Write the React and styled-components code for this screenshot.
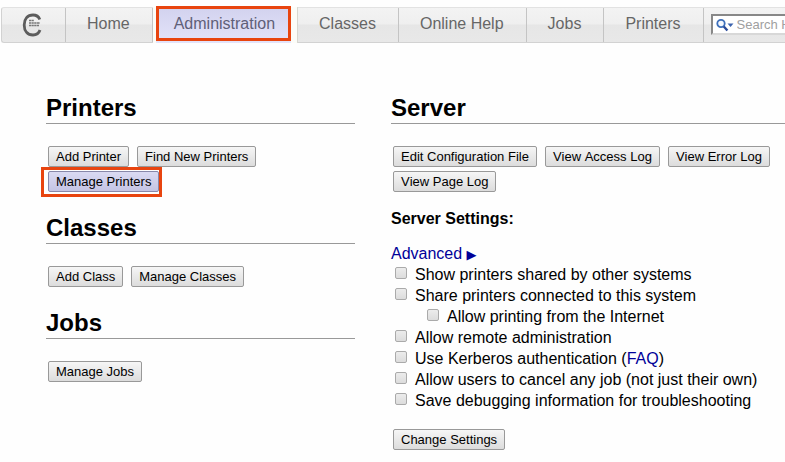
import React from "react";
import styled, { createGlobalStyle, css } from "styled-components";

const GlobalStyle = createGlobalStyle`
  * { box-sizing: border-box; }
  body {
    margin: 0;
    background: #fefefe;
    color: #000;
    font: 16px/21px "Liberation Sans", Arial, sans-serif;
  }
`;

const highlight = css`
  position: relative;
  &::after {
    content: "";
    position: absolute;
    border: 3px solid #e8440f;
    pointer-events: none;
  }
`;

const NavBar = styled.nav`
  display: flex;
  height: 36px;
  margin: 7px 0 0 1px;
  border: 1px solid #d2d2d2;
  border-top-color: #e2e2e2;
  border-right: 0;
  border-radius: 3px 0 0 3px;
  background: linear-gradient(#f3f3f3 0, #efefef 48%, #e6e6e6 49%, #e8e8e8 100%);
`;

const LogoLink = styled.a`
  display: flex;
  flex: none;
  align-items: center;
  justify-content: center;
  width: 64px;
  padding-right: 3px;
  border-right: 1px solid #c4c4c4;
`;

const Tab = styled.a`
  flex: none;
  padding: 0 22px 0 21px;
  border-right: 1px solid #c4c4c4;
  color: #666;
  line-height: 32px;
  text-decoration: none;
  ${(p) =>
    p.$active &&
    css`
      ${highlight}
      margin: -1px 0;
      border-right-color: #d8d8d0;
      background: linear-gradient(#d2d2ee, #e4e4fa) 3px 0 / calc(100% - 9px) 100% no-repeat #fcfcf8;
      color: #606078;
      line-height: 34px;
      &::after { inset: -1px 6px 2px 3px; }
    `}
`;

const SearchBox = styled.label`
  display: flex;
  flex: 1;
  align-items: center;
  min-width: 0;
  height: 21px;
  margin: 6px 0 0 7px;
  padding-left: 3px;
  border: 2px solid #d8d8d8;
  border-top-color: #888;
  border-left-color: #888;
  border-right: 0;
  background: #fff;
`;

const SearchInput = styled.input`
  flex: 1;
  min-width: 0;
  padding: 0;
  border: 0;
  outline: 0;
  margin-left: 3px;
  background: transparent;
  font: 13px "Liberation Sans", Arial, sans-serif;
  &::placeholder { color: #a0a0a0; opacity: 1; }
`;

const Content = styled.main`
  display: grid;
  grid-template-columns: minmax(0, 309fr) minmax(0, 394fr);
  gap: 36px;
  padding: 50px 0 0 46px;
`;

const Section = styled.section`
  margin-bottom: 19px;
`;

const Heading = styled.h2`
  margin: 0 0 20px;
  padding-bottom: 1px;
  border-bottom: 1px solid #999;
  font-size: 24px;
  line-height: 29px;
`;

const Actions = styled.div`
  display: flex;
  flex-wrap: wrap;
  gap: 4px 8px;
  padding: 2px;
`;

const Button = styled.button`
  height: 21px;
  padding: 0 7px;
  border: 1px solid #999;
  border-radius: 2px;
  background: linear-gradient(#f6f6f6, #dcdcdc);
  color: #000;
  font: 13px/19px "Liberation Sans", Arial, sans-serif;
  font-kerning: none;
  white-space: nowrap;
  ${(p) =>
    p.$marked &&
    css`
      ${highlight}
      border-color: #8888aa;
      background: linear-gradient(#dadaf2, #c4c4e4);
      &::after { inset: -5px -4px -6px -8px; }
    `}
`;

const SettingsTitle = styled.h3`
  margin: 14px 0;
  font-size: 16px;
  line-height: 21px;
`;

const Link = styled.a`
  color: #000099;
  text-decoration: none;
`;

const Arrow = styled.span`
  font: 13px/16px "DejaVu Sans", sans-serif;
`;

const Settings = styled.div`
  margin-bottom: 16px;
`;

const Option = styled.div`
  display: flex;
  padding-left: ${(p) => (p.$nested ? 36 : 4)}px;
  white-space: nowrap;
`;

const Checkbox = styled.input`
  appearance: none;
  flex: none;
  width: 12px;
  height: 12px;
  margin: 3px 8px 0 0;
  border: 1px solid #aaa;
  border-radius: 2px;
  background: linear-gradient(#ececec, #dcdcdc);
  &:checked { background: #777; }
`;

const Logo = () => (
  <svg width="20" height="24" viewBox="0 0 20 24" aria-hidden="true">
    <path
      d="M17.8 6.5C16.6 3.3 14 2 11 2C5.6 2 2.2 6 2.2 12S5.6 22 11 22C14.4 22 16.9 20.2 18 17"
      fill="none"
      stroke="#5c5c5c"
      strokeWidth="2.8"
    />
    <path d="M7 7.5h5M7 10h11M7 12.5h10" stroke="#777" strokeWidth="1.6" strokeDasharray="2.2 .4" />
  </svg>
);

const SearchIcon = () => (
  <svg width="18" height="14" viewBox="0 0 18 14" aria-hidden="true">
    <circle cx="5" cy="5.5" r="3.7" fill="#f4f8ff" stroke="#3d6fba" strokeWidth="1.8" />
    <path d="M7.8 8.5l3.6 4" stroke="#2b4c9b" strokeWidth="2.4" />
    <path d="M11.5 5.5h6l-3 3.5z" fill="#3c62ad" />
  </svg>
);

const tabs = ["Home", "Administration", "Classes", "Online Help", "Jobs", "Printers"];

const groups = [
  { title: "Printers", actions: ["Add Printer", "Find New Printers", "Manage Printers"] },
  { title: "Classes", actions: ["Add Class", "Manage Classes"] },
  { title: "Jobs", actions: ["Manage Jobs"] },
];

const serverActions = ["Edit Configuration File", "View Access Log", "View Error Log", "View Page Log"];

const options = [
  { id: "show", label: "Show printers shared by other systems" },
  { id: "share", label: "Share printers connected to this system" },
  { id: "internet", label: "Allow printing from the Internet", nested: true },
  { id: "remote", label: "Allow remote administration" },
  { id: "kerberos", label: "Use Kerberos authentication", faq: true },
  { id: "cancel", label: "Allow users to cancel any job (not just their own)" },
  { id: "debug", label: "Save debugging information for troubleshooting" },
];

export default function App() {
  return (
    <>
      <GlobalStyle />
      <NavBar>
        <LogoLink href="#" aria-label="CUPS">
          <Logo />
        </LogoLink>
        {tabs.map((tab) => (
          <Tab key={tab} href="#" $active={tab === "Administration"}>
            {tab}
          </Tab>
        ))}
        <SearchBox>
          <SearchIcon />
          <SearchInput type="text" placeholder="Search Help" aria-label="Search Help" />
        </SearchBox>
      </NavBar>
      <Content>
        <div>
          {groups.map(({ title, actions }) => (
            <Section key={title}>
              <Heading>{title}</Heading>
              <Actions>
                {actions.map((action) => (
                  <Button key={action} type="button" $marked={action === "Manage Printers"}>
                    {action}
                  </Button>
                ))}
              </Actions>
            </Section>
          ))}
        </div>
        <form>
          <Heading>Server</Heading>
          <Actions>
            {serverActions.map((action) => (
              <Button key={action} type="button">
                {action}
              </Button>
            ))}
          </Actions>
          <SettingsTitle>Server Settings:</SettingsTitle>
          <Settings>
            <Link href="#">
              Advanced <Arrow>▶</Arrow>
            </Link>
            {options.map(({ id, label, nested, faq }) => (
              <Option key={id} $nested={nested}>
                <Checkbox id={id} type="checkbox" />
                <label htmlFor={id}>{label}</label>
                {faq && (
                  <span>
                    &nbsp;(<Link href="#">FAQ</Link>)
                  </span>
                )}
              </Option>
            ))}
          </Settings>
          <Actions>
            <Button type="button">Change Settings</Button>
          </Actions>
        </form>
      </Content>
    </>
  );
}
